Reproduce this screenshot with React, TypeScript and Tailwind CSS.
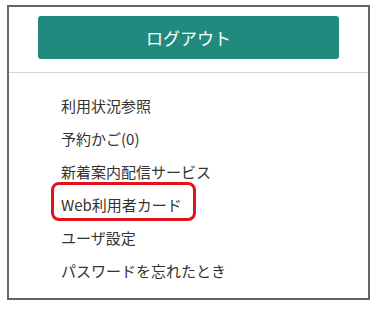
import React from 'react';

const items = [
  '利用状況参照',
  '予約かご(0)',
  '新着案内配信サービス',
  'Web利用者カード',
  'ユーザ設定',
  'パスワードを忘れたとき',
];

export default function App() {
  return (
    <div
      className="w-[377px] h-[310px] bg-white pl-[7px] pt-[5px]"
      style={{ fontFamily: '"Noto Sans CJK JP", "Noto Sans", sans-serif' }}
    >
      <div className="w-[363px] h-[295px] border-2 border-[#666666] flex flex-col">
        <div className="px-[29px] pt-[9px] pb-[13px]">
          <button className="w-full h-[43px] rounded-[3px] bg-[#218a7f] text-white text-[17px] flex items-center justify-center">
            ログアウト
          </button>
        </div>
        <div className="h-px bg-[#d4d4d4]" />
        <ul className="pt-[17px] pl-[52px] flex flex-col text-[15px] text-[#333333]">
          {items.map((label, i) => (
            <li key={label} className="relative h-[33px] flex items-center">
              {i === 3 && (
                <span className="absolute left-[-10px] top-[-7px] w-[145px] h-[39px] border-[3px] border-[#e0141e] rounded-[8px]" />
              )}
              <span className="relative">{label}</span>
            </li>
          ))}
        </ul>
      </div>
    </div>
  );
}
